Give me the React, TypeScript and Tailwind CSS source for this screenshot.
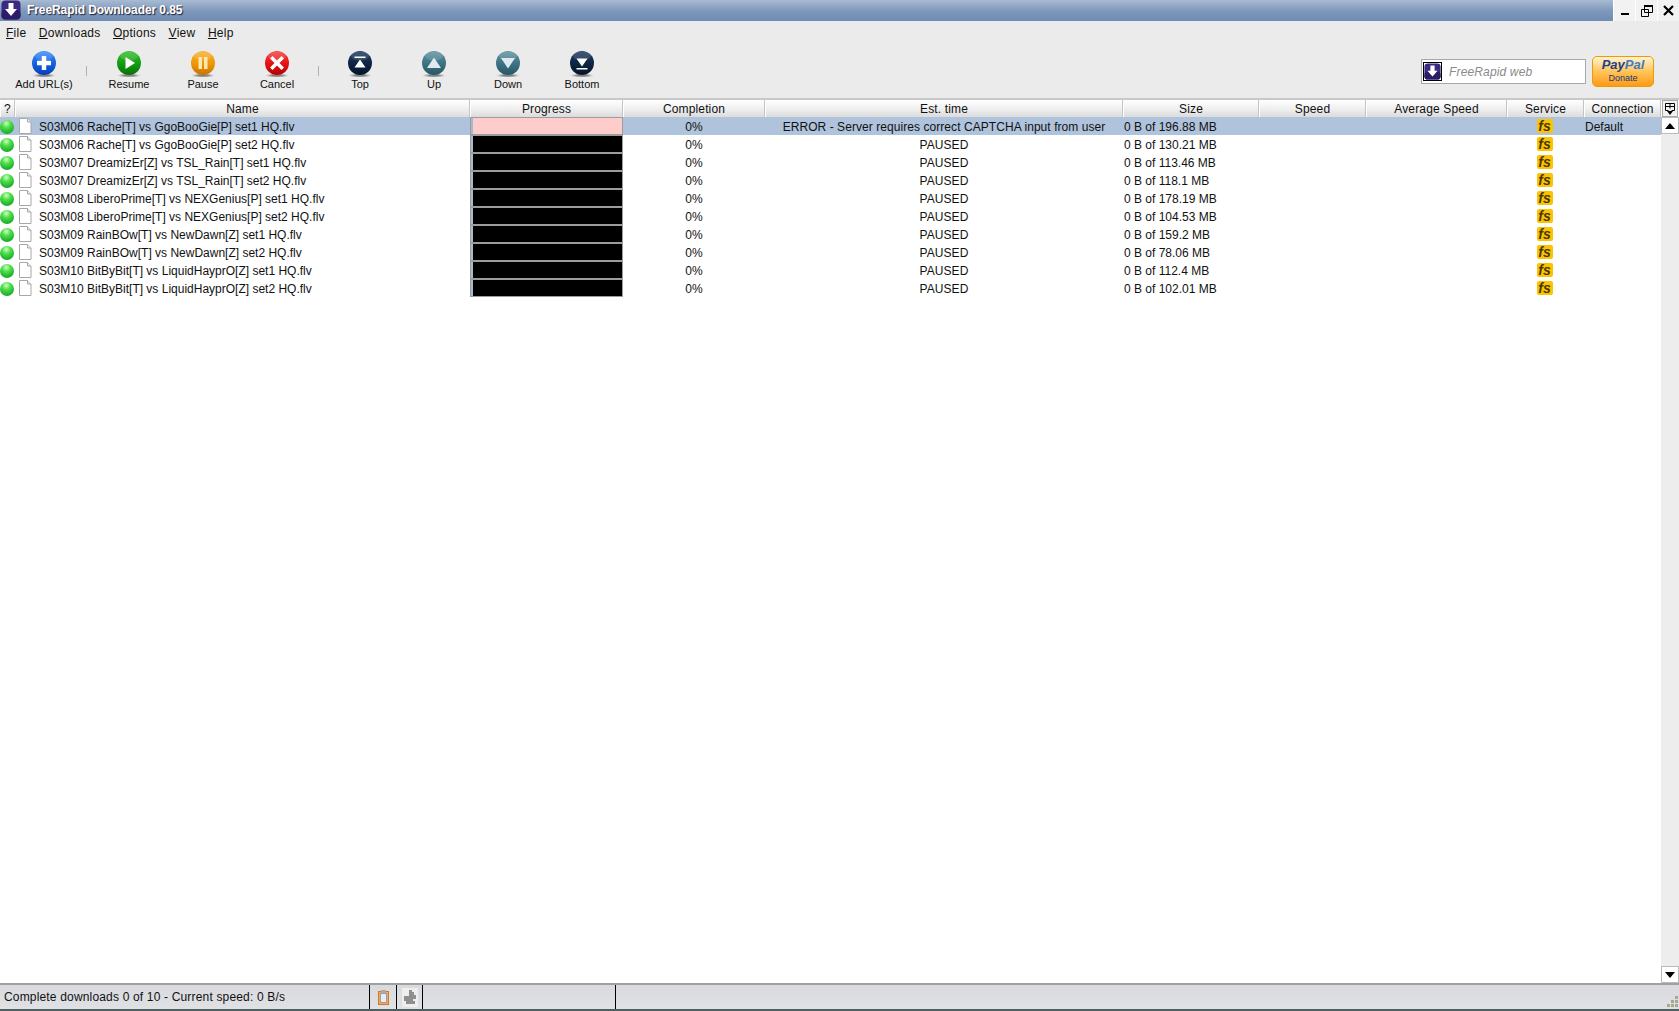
import React from "react";

const FONT = { fontFamily: '"Liberation Sans", Arial, sans-serif' };

const cols = [
  { name: "?", w: "w-[15px]" },
  { name: "Name", w: "w-[455px]" },
  { name: "Progress", w: "w-[153px]" },
  { name: "Completion", w: "w-[142px]" },
  { name: "Est. time", w: "w-[358px]" },
  { name: "Size", w: "w-[136px]" },
  { name: "Speed", w: "w-[107px]" },
  { name: "Average Speed", w: "w-[141px]" },
  { name: "Service", w: "w-[77px]" },
  { name: "Connection", w: "w-[77px]" },
];

const rows = [
  ["S03M06 Rache[T] vs GgoBooGie[P] set1 HQ.flv", "0 B of 196.88 MB"],
  ["S03M06 Rache[T] vs GgoBooGie[P] set2 HQ.flv", "0 B of 130.21 MB"],
  ["S03M07 DreamizEr[Z] vs TSL_Rain[T] set1 HQ.flv", "0 B of 113.46 MB"],
  ["S03M07 DreamizEr[Z] vs TSL_Rain[T] set2 HQ.flv", "0 B of 118.1 MB"],
  ["S03M08 LiberoPrime[T] vs NEXGenius[P] set1 HQ.flv", "0 B of 178.19 MB"],
  ["S03M08 LiberoPrime[T] vs NEXGenius[P] set2 HQ.flv", "0 B of 104.53 MB"],
  ["S03M09 RainBOw[T] vs NewDawn[Z] set1 HQ.flv", "0 B of 159.2 MB"],
  ["S03M09 RainBOw[T] vs NewDawn[Z] set2 HQ.flv", "0 B of 78.06 MB"],
  ["S03M10 BitByBit[T] vs LiquidHayprO[Z] set1 HQ.flv", "0 B of 112.4 MB"],
  ["S03M10 BitByBit[T] vs LiquidHayprO[Z] set2 HQ.flv", "0 B of 102.01 MB"],
];

function Orb({ id, c1, c2, c3, children }: { id: string; c1: string; c2: string; c3: string; children: React.ReactNode }) {
  return (
    <svg width="26" height="28" viewBox="0 0 26 28" className="block">
      <defs>
        <linearGradient id={id} x1="0" y1="0" x2="0" y2="1">
          <stop offset="0" stopColor={c1} />
          <stop offset="0.55" stopColor={c2} />
          <stop offset="1" stopColor={c3} />
        </linearGradient>
        <radialGradient id="shadow">
          <stop offset="0.4" stopColor="#555" stopOpacity="0.7" />
          <stop offset="1" stopColor="#777" stopOpacity="0" />
        </radialGradient>
      </defs>
      <ellipse cx="13" cy="25.5" rx="12" ry="2" fill="url(#shadow)" />
      <circle cx="13" cy="13" r="12" fill={`url(#${id})`} />
      <ellipse cx="13" cy="6" rx="9" ry="4.500" fill="#fff" opacity="0.14" />
      {children}
    </svg>
  );
}

const tools = [
  { label: "Add URL(s)", c: ["#3f8df5", "#0f5fe0", "#0a3fb0"], g: <path d="M10.8 6h4.4v4.8H20v4.4h-4.8V20h-4.4v-4.8H6v-4.4h4.8z" fill="#fff" /> },
  { label: "Resume", c: ["#35c02a", "#119c10", "#0a6f0a"], g: <path d="M9.500 7 19 13 9.500 19z" fill="#fff" /> },
  { label: "Pause", c: ["#f8b030", "#ee9505", "#c87300"], g: <path d="M8.500 7h3.500v12H8.500zM14 7h3.500v12H14z" fill="#fde7b0" /> },
  { label: "Cancel", c: ["#f34040", "#e60f0f", "#b00505"], g: <path d="M8.500 6 13 10.500 17.500 6 20 8.500 15.500 13l4.500 4.500-2.500 2.500L13 15.500 8.500 20 6 17.500 10.500 13 6 8.500z" fill="#fff" /> },
  { label: "Top", c: ["#1f3c62", "#0e2440", "#06142a"], g: <path d="M7.500 6.500h11v1.500h-11zM13 9.500l5.500 8h-11z" fill="#fff" /> },
  { label: "Up", c: ["#5f93a2", "#3c7181", "#285666"], g: <path d="M13 7.500l7 10.500H6z" fill="#dfeaef" /> },
  { label: "Down", c: ["#5f93a2", "#3c7181", "#285666"], g: <path d="M13 18.500L6 8h14z" fill="#dfeaef" /> },
  { label: "Bottom", c: ["#1f3c62", "#0e2440", "#06142a"], g: <path d="M7.500 18h11v1.500h-11zM13 16.500l-5.500-8h11z" fill="#fff" /> },
];

function Tool({ t, i }: { t: (typeof tools)[number]; i: number }) {
  return (
    <div className="flex w-[74px] flex-col items-center pt-[7px]">
      <Orb id={`orb${i}`} c1={t.c[0]} c2={t.c[1]} c3={t.c[2]}>{t.g}</Orb>
      <span className="mt-[-1px] text-[11px] leading-[14px] text-[#111]">{t.label}</span>
    </div>
  );
}

function Menu({ k, rest }: { k: string; rest: string }) {
  return (
    <span className="text-[12px] leading-[16px] tracking-[0.25px] text-[#111]">
      <span className="underline">{k}</span>
      {rest}
    </span>
  );
}

function LogoArrow({ size }: { size: number }) {
  return (
    <svg width={size} height={size} viewBox="0 0 20 20" className="block shrink-0">
      <rect x="0.5" y="0.5" width="19" height="19" rx="4" fill="#3b2a82" />
      <rect x="0.5" y="10" width="19" height="9.500" rx="4" fill="#2a1c66" />
      <path d="M7.500 3h5v6h3.500L10 16 4 9h3.500z" fill="#fff" />
    </svg>
  );
}

function FileIcon() {
  return (
    <svg width="14" height="16" viewBox="0 0 14 16" className="mt-[1px] block shrink-0">
      <path d="M1.500.5h8l3.500 3.500v11.500h-11.500z" fill="#fff" stroke="#a8a8a8" />
      <path d="M9.500.5V4H13" fill="#eee" stroke="#a8a8a8" />
    </svg>
  );
}

function Led({ i }: { i: number }) {
  return (
    <svg width="14" height="14" viewBox="0 0 14 14" className="mt-[3px] block">
      <defs>
        <radialGradient id={`led${i}`} cx="0.45" cy="0.25" r="0.85">
          <stop offset="0" stopColor="#d2ffc4" />
          <stop offset="0.35" stopColor="#4ee04a" />
          <stop offset="1" stopColor="#0b9a20" />
        </radialGradient>
      </defs>
      <circle cx="7" cy="7" r="7" fill={`url(#led${i})`} />
    </svg>
  );
}

function Fs() {
  return (
    <span className="mt-[2px] flex h-[14px] w-[16px] items-center justify-center rounded-[2px] bg-[#fcc400] text-[14px] font-bold italic leading-none text-[#4a3800]">
      fs
    </span>
  );
}

function Row({ r, i }: { r: string[]; i: number }) {
  const sel = i === 0;
  return (
    <div className={`flex h-[18px] items-start text-[12px] leading-[20px] text-[#111] ${sel ? "bg-[#afc3dc]" : "bg-white"}`}>
      <div className="flex w-[15px] shrink-0">
        <Led i={i} />
      </div>
      <div className="flex w-[455px] shrink-0 pl-[3px]">
        <FileIcon />
        <span className="ml-[5px] pl-[2px] whitespace-nowrap">{r[0]}</span>
      </div>
      <div className={`relative h-[18px] w-[153px] shrink-0 border border-[#9c9c9c] ${sel ? "bg-[#ffcccc]" : "bg-black"}`}>
        <div className="absolute left-0 top-0 h-full w-[2px] bg-[#a9b9cd]" />
      </div>
      <div className="w-[142px] shrink-0 text-center">0%</div>
      <div className="w-[358px] shrink-0 text-center tracking-[0.06px] whitespace-nowrap">
        {sel ? "ERROR - Server requires correct CAPTCHA input from user" : "PAUSED"}
      </div>
      <div className="w-[136px] shrink-0 pl-[1px] whitespace-nowrap">{r[1]}</div>
      <div className="w-[107px] shrink-0" />
      <div className="w-[141px] shrink-0" />
      <div className="flex w-[75px] shrink-0 justify-center">
        <Fs />
      </div>
      <div className="ml-[2px] w-[77px] shrink-0 pl-[1px]">{sel ? "Default" : ""}</div>
    </div>
  );
}

export default function App() {
  return (
    <div style={FONT} className="flex h-[1011px] w-[1679px] flex-col overflow-hidden bg-white">
      {/* title bar */}
      <div className="flex h-[21px] shrink-0 items-stretch bg-gradient-to-b from-[#a9bbd3] via-[#7f99bd] to-[#6f8bb2]">
        <div className="ml-[1px]">
          <LogoArrow size={20} />
        </div>
        <span className="ml-[6px] text-[12px] font-bold leading-[20px] tracking-[-0.08px] text-white [text-shadow:1px_1px_1px_#223]">
          FreeRapid Downloader 0.85
        </span>
        <div className="flex-1" />
        <div className="flex bg-white">
          <div className="ml-[1px] flex w-[21px] items-center justify-center bg-[#f2f2f2]">
            <div className="mt-[6px] h-[2px] w-[8px] bg-black" />
          </div>
          <div className="ml-[1px] flex w-[21px] items-center justify-center bg-[#f2f2f2]">
            <svg width="12" height="12" viewBox="0 0 12 12">
              <path d="M3.500.5h8v7h-8zM.5 4.500h7v7h-7z" fill="#f2f2f2" stroke="#000" />
              <path d="M3 0h9v2H3z" />
            </svg>
          </div>
          <div className="ml-[1px] flex w-[21px] items-center justify-center bg-[#f2f2f2]">
            <svg width="11" height="11" viewBox="0 0 11 11">
              <path d="M1 1l9 9M10 1l-9 9" stroke="#000" strokeWidth="2.200" />
            </svg>
          </div>
        </div>
      </div>

      {/* menu */}
      <div className="flex h-[22px] shrink-0 items-center gap-[12.5px] bg-[#ebebeb] pl-[6px] pt-[2px]">
        <Menu k="F" rest="ile" />
        <Menu k="D" rest="ownloads" />
        <Menu k="O" rest="ptions" />
        <Menu k="V" rest="iew" />
        <Menu k="H" rest="elp" />
      </div>

      {/* toolbar */}
      <div className="flex h-[55px] shrink-0 bg-[#ebebeb] pl-[7px]">
        <Tool t={tools[0]} i={0} />
        <div className="mx-[5px] mt-[23px] h-[10px] w-[1px] shrink-0 bg-[#b0b0b0]" />
        <Tool t={tools[1]} i={1} />
        <Tool t={tools[2]} i={2} />
        <Tool t={tools[3]} i={3} />
        <div className="mx-[4px] mt-[23px] h-[10px] w-[1px] shrink-0 bg-[#b0b0b0]" />
        <Tool t={tools[4]} i={4} />
        <Tool t={tools[5]} i={5} />
        <Tool t={tools[6]} i={6} />
        <Tool t={tools[7]} i={7} />
        <div className="flex-1" />
        <div className="mt-[16px] flex h-[25px] w-[165px] items-center border border-[#a8a8a8] bg-white pl-[1px]">
          <div className="border border-black">
            <LogoArrow size={17} />
          </div>
          <span className="ml-[7px] text-[12px] italic tracking-[0.15px] text-[#8a8a8a]">FreeRapid web</span>
        </div>
        <div className="ml-[6px] mr-[25px] mt-[13px] flex h-[31px] w-[62px] flex-col items-center rounded-[5px] border border-[#f09a00] bg-gradient-to-b from-[#fff3d0] via-[#ffc455] to-[#ff9a0a]">
          <span className="text-[13px] font-bold italic leading-[16px] text-[#1f3f86]">
            Pay<span className="text-[#3e7cc4]">Pal</span>
          </span>
          <span className="text-[9px] leading-[11px] text-[#123a80]">Donate</span>
        </div>
      </div>

      {/* table */}
      <div className="flex min-h-0 flex-1 flex-col border-t-[2px] border-[#c8c8c8]">
        <div className="flex h-[17px] shrink-0 items-stretch">
          {cols.map((c) => (
            <div
              key={c.name}
              className={`${c.w} shrink-0 border-l border-r border-l-white border-r-[#c4c4c4] bg-gradient-to-b from-white via-[#f0f0f0] to-[#dcdcdc] text-center text-[12px] leading-[18px] tracking-[0.15px] text-[#111]`}
            >
              {c.name}
            </div>
          ))}
          <div className="ml-[1px] mr-[1px] flex flex-1 items-center justify-center border border-[#aaa] bg-[#f2f2f2]">
            <svg width="12" height="12" viewBox="0 0 12 12">
              <path d="M1.500.5h9v7h-3M4.500 7.500h-3v-7M1.500 3.500h9M6 .5v5" fill="none" stroke="#000" />
              <path d="M3 8h6l-3 4z" />
            </svg>
          </div>
        </div>
        <div className="flex min-h-0 flex-1">
          <div className="flex-1">
            {rows.map((r, i) => (
              <Row key={i} r={r} i={i} />
            ))}
          </div>
          <div className="flex w-[18px] shrink-0 flex-col justify-between bg-[#ededed]">
            <div className="flex h-[17px] items-center justify-center border border-[#bbb] bg-white">
              <svg width="10" height="6" viewBox="0 0 10 6"><path d="M5 0l5 6H0z" /></svg>
            </div>
            <div className="flex h-[17px] items-center justify-center border border-[#bbb] bg-white">
              <svg width="10" height="6" viewBox="0 0 10 6"><path d="M5 6L0 0h10z" /></svg>
            </div>
          </div>
        </div>
      </div>

      {/* status bar */}
      <div className="flex h-[28px] shrink-0 items-stretch border-t-[2px] border-b-[2px] border-t-[#a0a0a0] border-b-[#506060] bg-gradient-to-b from-[#d8dade] to-[#e0e1e5] text-[12px] leading-[24px] text-[#111]">
        <div className="w-[370px] shrink-0 border-r border-black pl-[4px] tracking-[0.17px]">Complete downloads 0 of 10 - Current speed: 0 B/s</div>
        <div className="flex w-[27px] shrink-0 items-center justify-center border-r border-black">
          <svg width="11" height="15" viewBox="0 0 11 15">
            <rect x="0.5" y="1.500" width="10" height="13" fill="#f4a860" stroke="#d97a10" />
            <rect x="2.500" y="3.500" width="6" height="9" fill="#e8ecf4" stroke="#9a9ab0" />
            <rect x="3" y="0" width="5" height="3" fill="#aaa" />
          </svg>
        </div>
        <div className="flex w-[26px] shrink-0 items-center justify-center border-r border-black">
          <svg width="16" height="19" viewBox="0 0 16 19">
            <rect width="16" height="19" fill="#eeeeee" />
            <path d="M7 2h3v2h2v3h2v4h-3v2h2v3H4v-3H2V8h5z" fill="#8f8f8f" />
          </svg>
        </div>
        <div className="w-[193px] shrink-0 border-r border-black" />
        <div className="flex flex-1 items-end justify-end pb-[1px] pr-[1px]">
          <svg width="12" height="12" viewBox="0 0 12 12" fill="#a8a890">
            <path d="M9 0h3v3H9zM5 4h3v3H5zM9 4h3v3H9zM1 8h3v3H1zM5 8h3v3H5zM9 8h3v3H9z" />
          </svg>
        </div>
      </div>
    </div>
  );
}
